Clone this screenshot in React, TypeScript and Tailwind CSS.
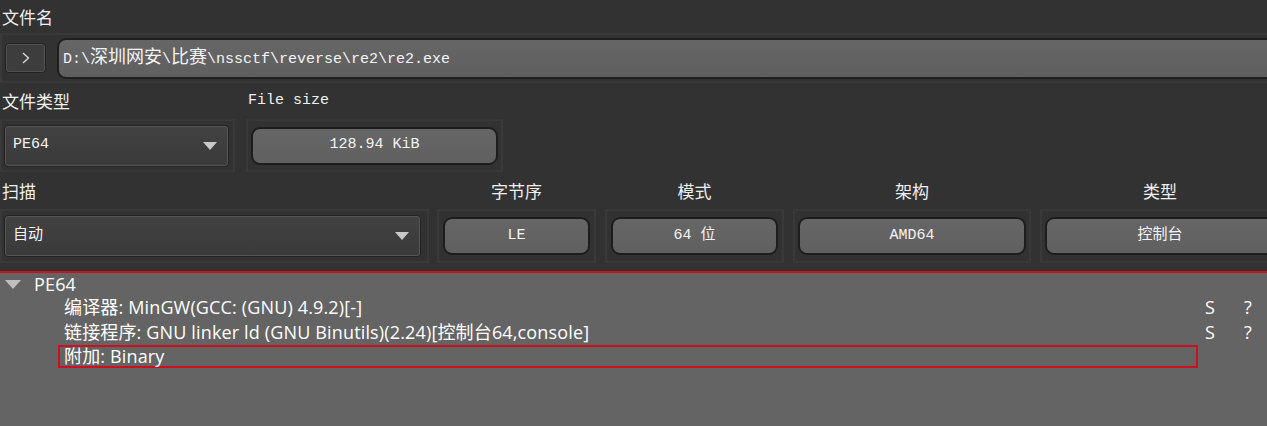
import React from 'react'

const mono = "font-['Liberation_Mono','Noto_Sans_CJK_SC',monospace]"

function Frame({ className, children }: { className: string; children: React.ReactNode }) {
  return (
    <div className={'border-2 border-[#393939] flex items-center ' + className}>
      {children}
    </div>
  )
}

function Combo({ value, width }: { value: string; width: string }) {
  return (
    <div className={'h-[42px] rounded-[4px] border border-[#232323] ' + width}>
      <div className="h-full rounded-[3px] border border-[#555555] bg-gradient-to-b from-[#424242] to-[#3a3a3a] flex items-center pl-[7px] pr-[10px]">
        <span className={mono + ' text-[15px] text-[#f4f4f4] flex-1'}>{value}</span>
        <svg width="14" height="8" viewBox="0 0 14 8">
          <polygon points="0,0 14,0 7,8" fill="#c9c9c9" />
        </svg>
      </div>
    </div>
  )
}

function ValueBox({ value, className = '' }: { value: string; className?: string }) {
  return (
    <div
      className={
        'h-[38px] rounded-[9px] border-2 border-[#1d1d1d] bg-gradient-to-b from-[#666666] to-[#606060] flex items-center justify-center text-[15px] text-[#f4f4f4] ' +
        mono +
        ' ' +
        className
      }
    >
      {value}
    </div>
  )
}

export default function App() {
  return (
    <div className="w-[1267px] h-[426px] overflow-hidden bg-[#323232] text-[#f0f0f0] flex flex-col font-['Noto_Sans_CJK_SC',sans-serif]">
      {/* file name */}
      <div className="h-[33px] shrink-0 flex items-center pl-[2px] text-[17px]">文件名</div>
      <Frame className="h-[50px] shrink-0 w-[1290px] pl-[3px] gap-[11px]">
        <div className="w-[41px] h-[30px] rounded-[4px] border border-[#222222]">
          <div className="h-full rounded-[3px] border border-[#515151] bg-[#3d3d3d] flex items-center justify-center">
            <svg width="8" height="12" viewBox="0 0 8 12">
              <polyline points="1,1 6.5,6 1,11" fill="none" stroke="#dcdcdc" strokeWidth="1.3" />
            </svg>
          </div>
        </div>
        <div className="flex-1 h-[41px] rounded-[9px] border-2 border-[#1f1f1f] bg-gradient-to-b from-[#666666] to-[#5f5f5f] flex items-center pl-[4px]">
          <span className={mono + ' text-[15px] text-[#f4f4f4]'}>
            D:\<span className="text-[18px]">深圳网安</span>\<span className="text-[18px]">比赛</span>\nssctf\reverse\re2\re2.exe
          </span>
        </div>
      </Frame>

      {/* type & size */}
      <div className="flex shrink-0 gap-[11px]">
        <div className="w-[235px] shrink-0 flex flex-col">
          <div className="h-[36px] flex items-center pl-[2px] text-[17px]">文件类型</div>
          <Frame className="h-[53px] pl-[2px]">
            <Combo value="PE64" width="w-[225px]" />
          </Frame>
        </div>
        <div className="w-[257px] shrink-0 flex flex-col">
          <div className={'h-[36px] flex items-center pl-[2px] text-[15px] ' + mono}>File size</div>
          <Frame className="h-[53px] px-[3px]">
            <ValueBox value="128.94 KiB" className="flex-1" />
          </Frame>
        </div>
      </div>

      {/* scan row */}
      <div className="flex shrink-0">
        <div className="w-[429px] shrink-0 flex flex-col">
          <div className="h-[37px] flex items-center pl-[2px] text-[17px]">扫描</div>
          <Frame className="h-[54px] pl-[2px]">
            <Combo value="自动" width="w-[417px]" />
          </Frame>
        </div>
        <div className="w-[159px] shrink-0 ml-[8px] flex flex-col">
          <div className="h-[37px] flex items-center justify-center text-[17px]">字节序</div>
          <Frame className="h-[54px] px-[4px]">
            <ValueBox value="LE" className="flex-1" />
          </Frame>
        </div>
        <div className="w-[179px] shrink-0 ml-[9px] flex flex-col">
          <div className="h-[37px] flex items-center justify-center text-[17px]">模式</div>
          <Frame className="h-[54px] px-[4px]">
            <ValueBox value="64 位" className="flex-1" />
          </Frame>
        </div>
        <div className="w-[238px] shrink-0 ml-[9px] flex flex-col">
          <div className="h-[37px] flex items-center justify-center text-[17px]">架构</div>
          <Frame className="h-[54px] px-[3px]">
            <ValueBox value="AMD64" className="flex-1" />
          </Frame>
        </div>
        <div className="w-[240px] shrink-0 ml-[9px] flex flex-col">
          <div className="h-[37px] flex items-center justify-center text-[17px]">类型</div>
          <Frame className="h-[54px] px-[3px]">
            <ValueBox value="控制台" className="flex-1" />
          </Frame>
        </div>
      </div>

      {/* result tree */}
      <div className="mt-[8px] flex-1 border-t-2 border-[#cc1020] bg-[#646464] text-white text-[18px] tracking-[0.15px] font-['Open_Sans','Noto_Sans_CJK_SC',sans-serif]">
        <div className="h-[22px] flex items-center pl-[5px]">
          <svg width="16" height="9" viewBox="0 0 16 9">
            <polygon points="0,0 16,0 8,9" fill="#bfbfbf" />
          </svg>
          <span className="ml-[13px]">PE64</span>
        </div>
        <div className="h-[25px] flex items-center pl-[64px]">
          <span className="flex-1">编译器: MinGW(GCC: (GNU) 4.9.2)[-]</span>
          <span className="w-[39px]">S</span>
          <span className="w-[23px]">?</span>
        </div>
        <div className="h-[25px] flex items-center pl-[64px]">
          <span className="flex-1">链接程序: GNU linker ld (GNU Binutils)(2.24)[控制台64,console]</span>
          <span className="w-[39px]">S</span>
          <span className="w-[23px]">?</span>
        </div>
        <div className="ml-[58px] w-[1140px] h-[23px] border-2 border-[#cc1020] flex items-center pl-[4px]">
          附加: Binary
        </div>
      </div>
    </div>
  )
}
